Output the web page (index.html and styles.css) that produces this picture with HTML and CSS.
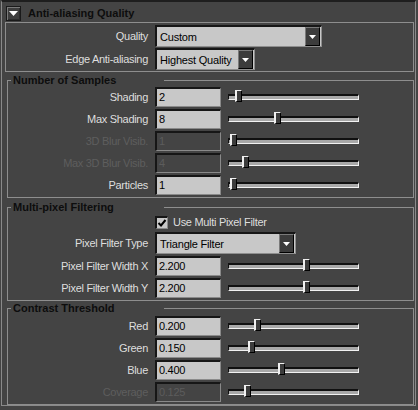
FILE: index.html
```html
<!DOCTYPE html>
<html>
<head>
<meta charset="utf-8">
<link rel="stylesheet" href="styles.css">
</head>
<body>
<div class="panel">
  <div class="header">
    <span class="collapse"><svg width="9" height="5" viewBox="0 0 9 5"><path d="M0 0h9L4.5 5z" fill="#fff"/></svg></span>
    <span class="htitle">Anti-aliasing Quality</span>
  </div>

  <div class="frame">
    <div class="row mrow">
      <span class="lbl">Quality</span>
      <div class="menu m-quality"><span class="mtext">Custom</span><span class="arrow"><svg width="7" height="4" viewBox="0 0 7 4"><path d="M0 0h7L3.5 4z" fill="#fff"/></svg></span></div>
    </div>
    <div class="row mrow">
      <span class="lbl">Edge Anti-aliasing</span>
      <div class="menu m-edge"><span class="mtext">Highest Quality</span><span class="arrow"><svg width="7" height="4" viewBox="0 0 7 4"><path d="M0 0h7L3.5 4z" fill="#fff"/></svg></span></div>
    </div>
  </div>

  <fieldset class="group g-samples">
    <legend>Number of Samples</legend>
    <div class="row"><span class="lbl">Shading</span><span class="field">2</span><div class="slider"><div class="track"></div><span class="knob" style="left:7px"></span></div></div>
    <div class="row"><span class="lbl">Max Shading</span><span class="field">8</span><div class="slider"><div class="track"></div><span class="knob" style="left:46px"></span></div></div>
    <div class="row off"><span class="lbl">3D Blur Visib.</span><span class="field">1</span><div class="slider"><div class="track"></div><span class="knob" style="left:2px"></span></div></div>
    <div class="row off"><span class="lbl">Max 3D Blur Visib.</span><span class="field">4</span><div class="slider"><div class="track"></div><span class="knob" style="left:14px"></span></div></div>
    <div class="row"><span class="lbl">Particles</span><span class="field">1</span><div class="slider"><div class="track"></div><span class="knob" style="left:2px"></span></div></div>
  </fieldset>

  <fieldset class="group g-filter">
    <legend>Multi-pixel Filtering</legend>
    <div class="row crow">
      <span class="lbl"></span>
      <label class="check"><span class="box"><svg width="10" height="10" viewBox="0 0 10 10"><path d="M1.5 5l2.5 2.5L8.5 2" fill="none" stroke="#000" stroke-width="2"/></svg></span><span>Use Multi Pixel Filter</span></label>
    </div>
    <div class="row mrow">
      <span class="lbl">Pixel Filter Type</span>
      <div class="menu m-type"><span class="mtext">Triangle Filter</span><span class="arrow"><svg width="7" height="4" viewBox="0 0 7 4"><path d="M0 0h7L3.5 4z" fill="#fff"/></svg></span></div>
    </div>
    <div class="row"><span class="lbl">Pixel Filter Width X</span><span class="field">2.200</span><div class="slider"><div class="track"></div><span class="knob" style="left:75px"></span></div></div>
    <div class="row"><span class="lbl">Pixel Filter Width Y</span><span class="field">2.200</span><div class="slider"><div class="track"></div><span class="knob" style="left:75px"></span></div></div>
  </fieldset>

  <fieldset class="group g-contrast">
    <legend>Contrast Threshold</legend>
    <div class="row"><span class="lbl">Red</span><span class="field">0.200</span><div class="slider"><div class="track"></div><span class="knob" style="left:26px"></span></div></div>
    <div class="row"><span class="lbl">Green</span><span class="field">0.150</span><div class="slider"><div class="track"></div><span class="knob" style="left:20px"></span></div></div>
    <div class="row"><span class="lbl">Blue</span><span class="field">0.400</span><div class="slider"><div class="track"></div><span class="knob" style="left:50px"></span></div></div>
    <div class="row off"><span class="lbl">Coverage</span><span class="field">0.125</span><div class="slider"><div class="track"></div><span class="knob" style="left:16px"></span></div></div>
  </fieldset>
</div>
</body>
</html>
```

FILE: styles.css
```css
html, body {
  margin: 0;
  padding: 0;
  background: #444444;
}
body {
  width: 418px;
  height: 410px;
  overflow: hidden;
  font-family: "Liberation Sans", Arial, sans-serif;
  font-size: 11px;
  color: #dedede;
}
.panel {
  margin-left: 1px;
  width: 415px;
  height: 406px;
  border-left: 1px solid #8a8a8a;
  border-right: 1px solid #8a8a8a;
  border-bottom: 1px solid #8a8a8a;
  border-top: 2px solid #1e1e1e;
  box-sizing: border-box;
  padding: 0 1px 0 2px;
}
.header {
  height: 20px;
  display: flex;
  align-items: center;
  gap: 7px;
  padding-left: 2px;
}
.collapse {
  width: 15px;
  height: 15px;
  box-sizing: border-box;
  border: 1px solid #1a1a1a;
  box-shadow: inset 1px 1px 0 #7a7a7a, inset -1px -1px 0 #2c2c2c;
  background: #3e3e3e;
  display: flex;
  align-items: center;
  justify-content: center;
  margin-top: 3px;
}
.htitle {
  font-weight: bold;
  color: #0d0d0d;
  font-size: 11px;
  margin-top: 2px;
}
.frame {
  margin: 0 0 0 1px;
  border: 1px solid #8e8e8e;
  padding: 2px 0 1px 2px;
  display: flex;
  flex-direction: column;
  gap: 1px;
}
.row {
  display: flex;
  align-items: center;
  height: 20px;
  gap: 7px;
}
.mrow { height: 22px; }
.crow { height: 16px; }
.lbl {
  width: 140px;
  flex: none;
  text-align: right;
  white-space: nowrap;
  letter-spacing: -0.3px;
}
.off .lbl { color: #5e5e5e; }
.field {
  width: 66px;
  height: 20px;
  box-sizing: border-box;
  flex: none;
  background: #c8c8c8;
  color: #000;
  border-top: 2px solid #161616;
  border-left: 2px solid #161616;
  border-right: 1px solid #8a8a8a;
  border-bottom: 1px solid #8a8a8a;
  padding-left: 2px;
  line-height: 17px;
  letter-spacing: -0.3px;
}
.off .field {
  background: #444444;
  color: #5c5c5c;
}
.slider {
  position: relative;
  width: 131px;
  height: 20px;
  display: flex;
  align-items: center;
}
.track {
  width: 100%;
  height: 6px;
  box-sizing: border-box;
  border-top: 2px solid #101010;
  border-left: 1px solid #101010;
  border-bottom: 1px solid #f2f2f2;
  border-right: 1px solid #f2f2f2;
  background: #a8a8a8;
}
.knob {
  position: absolute;
  top: 3px;
  width: 7px;
  height: 12px;
  box-sizing: border-box;
  background: #3c3c3c;
  border-left: 2px solid #f0f0f0;
  border-top: 1px solid #f0f0f0;
  border-right: 1px solid #000;
  border-bottom: 1px solid #000;
}
.menu {
  height: 22px;
  box-sizing: border-box;
  display: flex;
  align-items: center;
  background: #c8c8c8;
  color: #000;
  border-top: 2px solid #161616;
  border-left: 2px solid #161616;
  border-right: 1px solid #8e8e8e;
  border-bottom: 1px solid #8e8e8e;
}
.m-quality { width: 167px; }
.m-edge { width: 100px; }
.m-type { width: 141px; }
.mtext {
  flex: 1;
  padding-left: 3px;
  letter-spacing: -0.2px;
}
.arrow {
  width: 15px;
  height: 19px;
  box-sizing: border-box;
  background: #3c3c3c;
  border-left: 1px solid #7a7a7a;
  border-top: 1px solid #7a7a7a;
  border-right: 1px solid #000;
  border-bottom: 1px solid #000;
  display: flex;
  align-items: center;
  justify-content: center;
  margin-right: 1px;
}
.group {
  margin: 0;
  min-width: 0;
  border: 1px solid #8e8e8e;
  padding: 0 0 2px 0;
  margin-left: 3px;
  display: flex;
  flex-direction: column;
  gap: 2px;
}
.group legend {
  font-weight: bold;
  color: #0d0d0d;
  width: 153px;
  padding: 0 0 0 2px;
  margin-left: 3px;
  box-sizing: border-box;
  line-height: 13px;
}
.g-samples { margin-top: 2px; padding-top: 0; }
.g-filter { margin-top: 3px; padding-top: 0; }
.g-contrast { margin-top: 1px; padding-top: 1px; }
.check {
  display: flex;
  align-items: center;
  gap: 5px;
  letter-spacing: -0.3px;
}
.box {
  width: 13px;
  height: 13px;
  box-sizing: border-box;
  background: #c8c8c8;
  border-top: 2px solid #161616;
  border-left: 2px solid #161616;
  border-right: 1px solid #8a8a8a;
  border-bottom: 1px solid #8a8a8a;
  display: flex;
  align-items: center;
  justify-content: center;
}
```
